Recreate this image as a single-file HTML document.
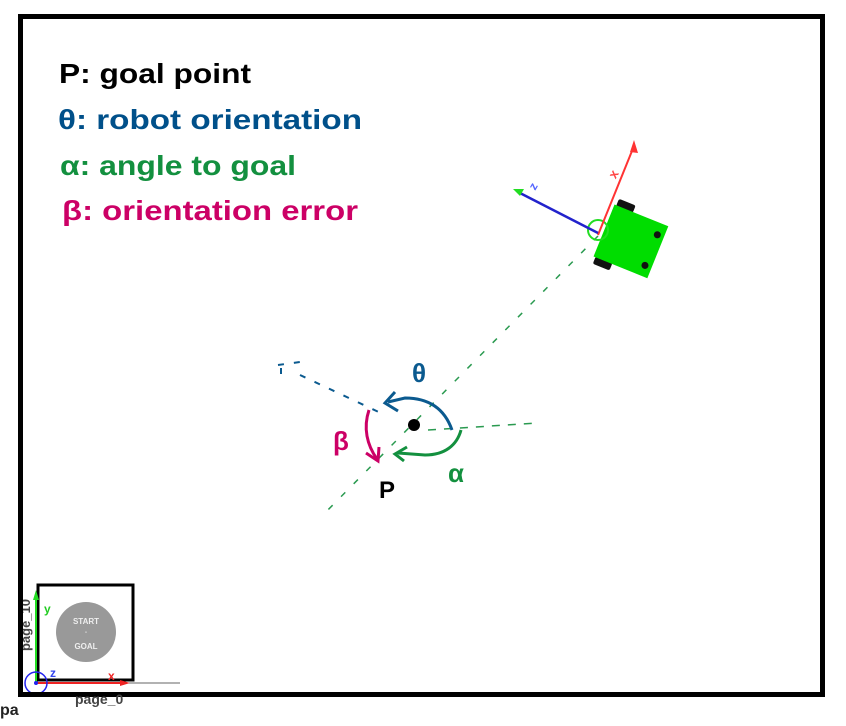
<!DOCTYPE html>
<html><head><meta charset="utf-8"><style>
html,body{margin:0;padding:0;background:#fff;}
svg{display:block;}
text{font-family:"Liberation Sans",sans-serif;font-weight:bold;}
</style></head><body>
<svg width="846" height="726" viewBox="0 0 846 726" xmlns="http://www.w3.org/2000/svg">
<rect x="20.5" y="16.5" width="802" height="678" fill="#fff" stroke="#000" stroke-width="5"/>
<text x="59" y="83" font-size="28" fill="#000" textLength="192" lengthAdjust="spacingAndGlyphs">P: goal point</text>
<text x="58" y="129" font-size="28" fill="#00508a" textLength="304" lengthAdjust="spacingAndGlyphs">θ: robot orientation</text>
<text x="60" y="175" font-size="28" fill="#13903f" textLength="236" lengthAdjust="spacingAndGlyphs">α: angle to goal</text>
<text x="62" y="220" font-size="28" fill="#cc0066" textLength="296" lengthAdjust="spacingAndGlyphs">β: orientation error</text>
<path d="M598,236 L320,518" stroke="#2a9a50" stroke-width="1.5" stroke-dasharray="6,12" fill="none"/>
<path d="M428,430 L538,423" stroke="#2a9a50" stroke-width="1.5" stroke-dasharray="8,8" fill="none"/>
<path d="M278,365 L300,362 M281,368 L281,380 M300,375 L385,415" stroke="#0b5a8f" stroke-width="2" stroke-dasharray="6,10" fill="none"/>
<g transform="translate(630,241) rotate(22)">
<rect x="-26" y="-35" width="18" height="8" fill="#111" rx="2"/>
<rect x="-26" y="27" width="18" height="8" fill="#111" rx="2"/>
<rect x="-28" y="-28" width="58" height="56" fill="#00dd00"/>
<circle cx="23" cy="-16" r="3.5" fill="#111"/>
<circle cx="23" cy="17" r="3.5" fill="#111"/>
</g>
<circle cx="598" cy="230" r="10" fill="none" stroke="#22dd22" stroke-width="2"/>
<path d="M598,235 L634,146" stroke="#ff3333" stroke-width="2"/>
<path d="M634,140 L630,152 L638,153 Z" fill="#ff3333"/>
<path d="M598,233 L518,192" stroke="#2222cc" stroke-width="2.5"/>
<path d="M513,189 L524,189 L520,196 Z" fill="#22dd22"/>
<text x="530" y="188" font-size="12" fill="#5566ff" transform="rotate(-60 535 185)">z</text>
<text x="610" y="178" font-size="13" fill="#ff4444" transform="rotate(-60 614 174)">x</text>
<circle cx="414" cy="425" r="6" fill="#000"/>
<path d="M452,430 C445,410 430,398 405,398 L388,402" stroke="#0b5a8f" stroke-width="3" fill="none"/>
<path d="M395,392 L385,403 L398,411" stroke="#0b5a8f" stroke-width="3" fill="none"/>
<text x="412" y="382" font-size="26" fill="#0b5a8f">θ</text>
<path d="M461,430 C457,445 445,455 425,455 L398,453" stroke="#13903f" stroke-width="3" fill="none"/>
<path d="M407,447 L395,454 L404,461" stroke="#13903f" stroke-width="3" fill="none"/>
<text x="448" y="482" font-size="26" fill="#13903f">α</text>
<path d="M369,410 C363,428 367,445 377,459" stroke="#cc0066" stroke-width="3" fill="none"/>
<path d="M366,453 L378,461 L379,447" stroke="#cc0066" stroke-width="3" fill="none"/>
<text x="333" y="450" font-size="26" fill="#cc0066">β</text>
<text x="379" y="498" font-size="24" fill="#000">P</text>
<rect x="38" y="585" width="95" height="95" fill="#fff" stroke="#000" stroke-width="3"/>
<circle cx="86" cy="632" r="30" fill="#999"/>
<text x="86" y="624" font-size="8" fill="#eee" font-weight="normal" text-anchor="middle">START</text>
<text x="86" y="634" font-size="6" fill="#eee" font-weight="normal" text-anchor="middle">-</text>
<text x="86" y="649" font-size="8" fill="#eee" font-weight="normal" text-anchor="middle">GOAL</text>
<path d="M36,683 L180,683" stroke="#666" stroke-width="1"/>
<path d="M36,683 L36,598" stroke="#22dd22" stroke-width="2"/>
<path d="M33,600 L36,590 L39,600 Z" fill="#22dd22"/>
<text x="44" y="613" font-size="12" fill="#22cc22" font-weight="normal">y</text>
<path d="M36,683 L122,683" stroke="#ee2222" stroke-width="2"/>
<path d="M120,680 L130,683 L120,686 Z" fill="#ee2222"/>
<text x="108" y="680" font-size="12" fill="#ee2222" font-weight="normal">x</text>
<circle cx="36" cy="683" r="11" fill="none" stroke="#2222ee" stroke-width="1.5"/>
<circle cx="36" cy="683" r="2" fill="#2222ee"/>
<text x="50" y="677" font-size="12" fill="#3344ee" font-weight="normal">z</text>
<text x="30" y="625" font-size="13" fill="#444" font-weight="normal" transform="rotate(-90 30 625)" text-anchor="middle">page_10</text>
<rect x="18" y="570" width="5" height="124" fill="#000"/>
<rect x="18" y="692" width="807" height="5" fill="#000"/>
<text x="75" y="704" font-size="14" fill="#444" font-weight="normal">page_0</text>
<text x="0" y="715" font-size="16" fill="#222">pa</text>
</svg>
</body></html>
